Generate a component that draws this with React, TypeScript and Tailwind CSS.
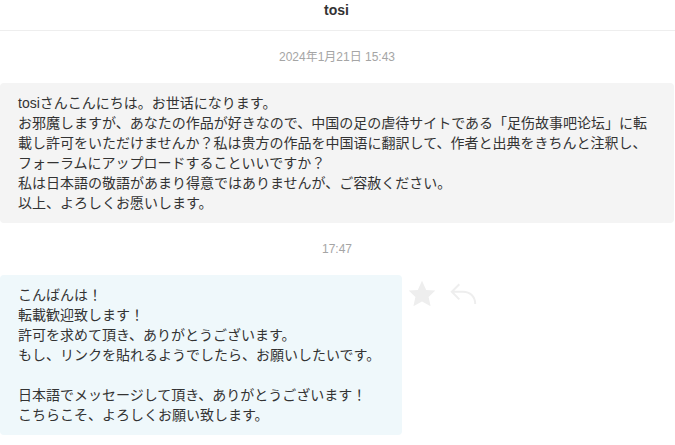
import type { ReactNode } from 'react';

function TimeStamp({ children }: { children: ReactNode }) {
  return (
    <div className="flex h-[52px] items-center justify-center text-[12px] text-[#a5a5a5]">
      <time>{children}</time>
    </div>
  );
}

function Bubble({ lines, tone }: { lines: string[]; tone: string }) {
  return (
    <div className={`rounded-[4px] py-[10px] pr-[22px] pl-[18px] ${tone}`}>
      {lines.map((line, i) => (
        <p key={i} className="min-h-5">
          {line}
        </p>
      ))}
    </div>
  );
}

const received = [
  'tosiさんこんにちは。お世话になります。',
  'お邪魔しますが、あなたの作品が好きなので、中国の足の虐待サイトである「足伤故事吧论坛」に転載し許可をいただけませんか？私は贵方の作品を中国语に翻訳して、作者と出典をきちんと注釈し、フォーラムにアップロードすることいいですか？',
  '私は日本語の敬語があまり得意ではありませんが、ご容赦ください。',
  '以上、よろしくお愿いします。',
];

const reply = [
  'こんばんは！',
  '転載歓迎致します！',
  '許可を求めて頂き、ありがとうございます。',
  'もし、リンクを貼れるようでしたら、お願いしたいです。',
  '',
  '日本語でメッセージして頂き、ありがとうございます！',
  'こちらこそ、よろしくお願い致します。',
];

export default function App() {
  return (
    <main
      lang="ja"
      className="min-h-screen bg-white pb-[10px] font-['Liberation_Sans','Noto_Sans_CJK_JP',sans-serif] text-[14px] leading-5 text-[#333333]"
    >
      <header className="border-b border-[#eeeeee] pr-[2px] pb-[10px]">
        <h1 className="text-center font-bold">tosi</h1>
      </header>
      <div className="pr-px">
        <TimeStamp>2024年1月21日 15:43</TimeStamp>
        <article>
          <Bubble lines={received} tone="bg-[#f4f4f4]" />
        </article>
        <TimeStamp>17:47</TimeStamp>
        <article className="flex items-start">
          <Bubble lines={reply} tone="bg-[#eff8fb]" />
          <div className="flex gap-[14px] pt-[5px] pl-[6px] text-[#eeeeee]">
            <button type="button" aria-label="お気に入り">
              <svg width="28" height="28" viewBox="0 0 28 28" fill="currentColor">
                <path d="M14 0.8 18.2 9.9 27.3 10.6 20.6 17 22.6 26.2 14 21.6 5.4 26.2 7.4 17 0.7 10.6 9.8 9.9Z" />
              </svg>
            </button>
            <button type="button" aria-label="返信">
              <svg
                width="28"
                height="28"
                viewBox="0 0 28 28"
                fill="none"
                stroke="currentColor"
                strokeWidth="2"
              >
                <path d="M9.3 4.2 1.8 11.8 9.3 19.4M1.8 11.8H13C20 11.8 25.2 16.5 25.2 24" />
              </svg>
            </button>
          </div>
        </article>
      </div>
    </main>
  );
}
